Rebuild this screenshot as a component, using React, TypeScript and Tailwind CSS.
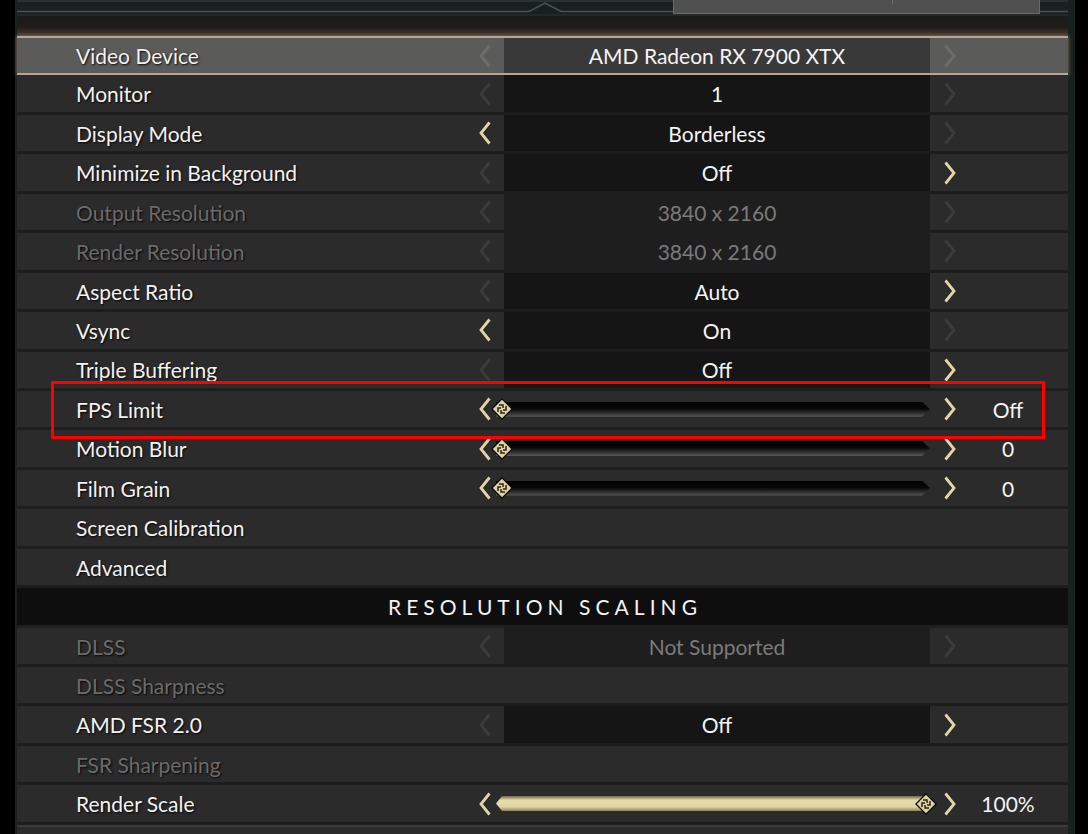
import { FC } from "react";

type Row =
  | {
      kind: "select";
      label: string;
      value: string;
      left?: boolean;
      right?: boolean;
      disabled?: boolean;
      active?: boolean;
    }
  | { kind: "slider"; label: string; pct: number; display: string }
  | { kind: "link"; label: string; disabled?: boolean }
  | { kind: "header"; label: string };

const rows: Row[] = [
  { kind: "select", label: "Video Device", value: "AMD Radeon RX 7900 XTX", active: true },
  { kind: "select", label: "Monitor", value: "1" },
  { kind: "select", label: "Display Mode", value: "Borderless", left: true },
  { kind: "select", label: "Minimize in Background", value: "Off", right: true },
  { kind: "select", label: "Output Resolution", value: "3840 x 2160", disabled: true },
  { kind: "select", label: "Render Resolution", value: "3840 x 2160", disabled: true },
  { kind: "select", label: "Aspect Ratio", value: "Auto", right: true },
  { kind: "select", label: "Vsync", value: "On", left: true },
  { kind: "select", label: "Triple Buffering", value: "Off", right: true },
  { kind: "slider", label: "FPS Limit", pct: 0, display: "Off" },
  { kind: "slider", label: "Motion Blur", pct: 0, display: "0" },
  { kind: "slider", label: "Film Grain", pct: 0, display: "0" },
  { kind: "link", label: "Screen Calibration" },
  { kind: "link", label: "Advanced" },
  { kind: "header", label: "Resolution Scaling" },
  { kind: "select", label: "DLSS", value: "Not Supported", disabled: true },
  { kind: "link", label: "DLSS Sharpness", disabled: true },
  { kind: "select", label: "AMD FSR 2.0", value: "Off", right: true },
  { kind: "link", label: "FSR Sharpening", disabled: true },
  { kind: "slider", label: "Render Scale", pct: 100, display: "100%" },
];

const Chevron: FC<{ dir: "left" | "right"; on?: boolean; dim?: boolean }> = ({ dir, on, dim }) => (
  <svg width="14" height="24" viewBox="0 0 14 24" className="block">
    <path
      d={dir === "left" ? "M11.5 1.5 L3 12 L11.5 22.5" : "M2.5 1.5 L11 12 L2.5 22.5"}
      fill="none"
      stroke={on ? "#e2d6a6" : dim ? "#6e6e68" : "#3c3c3a"}
      strokeWidth="2.8"
      strokeLinejoin="miter"
    />
  </svg>
);

// diamond knob with a small pinwheel
const Knob: FC = () => (
  <svg width="22" height="22" viewBox="0 0 22 22" className="block">
    <polygon points="11,0 22,11 11,22 0,11" fill="#0a0a0a" />
    <polygon points="11,1.8 20.2,11 11,20.2 1.8,11" fill="#e0d3a3" />
    <path
      d="M8 7 H12 V10 M15 8 V12 H12 M14 15 H10 V12 M7 14 V10 H10"
      fill="none"
      stroke="#2a2418"
      strokeWidth="1.5"
    />
  </svg>
);

const labelCls =
  "text-[21px] [text-shadow:1px_1px_2px_rgba(0,0,0,0.9)] whitespace-nowrap";

const SettingRow: FC<{ row: Row }> = ({ row }) => {
  if (row.kind === "header") {
    return (
      <div className="h-[39.45px] bg-[#0e0e0e] border-b-[3px] border-[#1f1f1f] flex items-center justify-center">
        <span className="text-[21px] uppercase tracking-[0.24em] text-[#f4f4f4] pl-[5px]">
          {row.label}
        </span>
      </div>
    );
  }

  const active = row.kind === "select" && row.active;
  const disabled = (row.kind === "select" || row.kind === "link") && row.disabled;

  return (
    <div
      className={
        active
          ? "h-[39.45px] flex bg-[#5b5b5a] border-y-2 border-[#b9a595] shadow-[0_0_4px_#8a7462]"
          : "h-[39.45px] flex bg-[#2b2b2b] border-b-[3px] border-[#1d1d1d]"
      }
    >
      <div className="w-[453px] pl-[59px] flex items-center pt-[1px]">
        <span
          className={`${labelCls} ${disabled ? "text-[#6b6b6b]" : "text-[#f2f2f2]"}`}
        >
          {row.label}
        </span>
      </div>

      {row.kind === "select" && (
        <div className="flex">
          <div className="w-[34px] flex items-center justify-end pr-[12px]">
            <Chevron dir="left" on={row.left} dim={active} />
          </div>
          <div
            className={`w-[426px] flex items-center justify-center text-[21px] pt-[1px] ${
              active ? "bg-[#393939]" : disabled ? "bg-[#1e1e1e]" : "bg-[#151515]"
            } ${disabled ? "text-[#7a7a7a]" : "text-[#f4f4f4]"}`}
          >
            {row.value}
          </div>
          <div className="w-[40px] flex items-center pl-[13px]">
            <Chevron dir="right" on={row.right} dim={active} />
          </div>
        </div>
      )}

      {row.kind === "slider" && (
        <div className="flex">
          <div className="w-[34px] flex items-center justify-end pr-[12px]">
            <Chevron dir="left" on />
          </div>
          <div className="w-[426px] flex items-center">
            <div className="relative -ml-[8px] w-[441px] h-[15px]">
              {row.pct > 0 ? (
                <div className="h-full bg-[linear-gradient(180deg,#6f684c_0%,#e6dbaa_28%,#e2d6a4_72%,#8c8462_100%)] [clip-path:polygon(0_50%,6px_0,100%_0,100%_100%,6px_100%)]" />
              ) : (
                <div className="h-full bg-[linear-gradient(180deg,#000_0%,#080808_45%,#383838_80%,#5a5a5a_100%)] [clip-path:polygon(0_0,calc(100%-8px)_0,100%_50%,calc(100%-8px)_100%,0_100%)]" />
              )}
              <div
                className="absolute top-1/2 -translate-y-1/2 -translate-x-1/2"
                style={{ left: row.pct > 0 ? "calc(100% - 4px)" : "6px" }}
              >
                <Knob />
              </div>
            </div>
          </div>
          <div className="w-[40px] flex items-center pl-[13px]">
            <Chevron dir="right" on />
          </div>
          <div className="w-[76px] flex items-center justify-center text-[21px] text-[#f4f4f4] pt-[1px]">
            {row.display}
          </div>
        </div>
      )}
    </div>
  );
};

const App: FC = () => {
  return (
    <div
      className="w-[1088px] h-[834px] bg-black flex overflow-hidden relative"
      style={{ fontFamily: "Lato, 'Open Sans', sans-serif" }}
    >
      <div className="w-[15px] shrink-0 bg-black" />
      <div className="w-[1060px] shrink-0 bg-[#18211f] pl-[2px] pr-[7px] flex flex-col">
        {/* top bar with notch */}
        <div className="h-[16px] relative border-t-2 border-[#2c302f]">
          <svg width="1051" height="14" viewBox="0 0 1051 14" className="absolute left-0 top-0">
            <path d="M0 9.5 H512 L528 1 L544 9.5 H1051" fill="none" stroke="#4b5250" strokeWidth="1.5" />
            <path d="M0 13 H1051" stroke="#2d3533" strokeWidth="1" />
          </svg>
        </div>
        <div className="h-[20px] bg-[linear-gradient(180deg,#1b1b1b_0%,#1f1c1a_55%,#4b3b31_100%)]" />
        {rows.map((r, i) => (
          <SettingRow key={i} row={r} />
        ))}
        <div className="h-[2px] bg-[#3a3a3a]" />
        <div className="flex-1 bg-[#2b2b2b]" />
      </div>

      {/* tab at top right */}
      <div className="absolute left-[673px] top-0 w-[367px] h-[14px] bg-[#505050] border border-t-0 border-[#6a6a6a]">
        <div className="absolute left-[218px] top-0 w-px h-[4px] bg-[#6a6a6a]" />
      </div>

      {/* red highlight frame */}
      <div className="absolute left-[51px] top-[381px] w-[994px] h-[58px] border-[3px] border-[#ff0000]" />
    </div>
  );
};

export default App;
